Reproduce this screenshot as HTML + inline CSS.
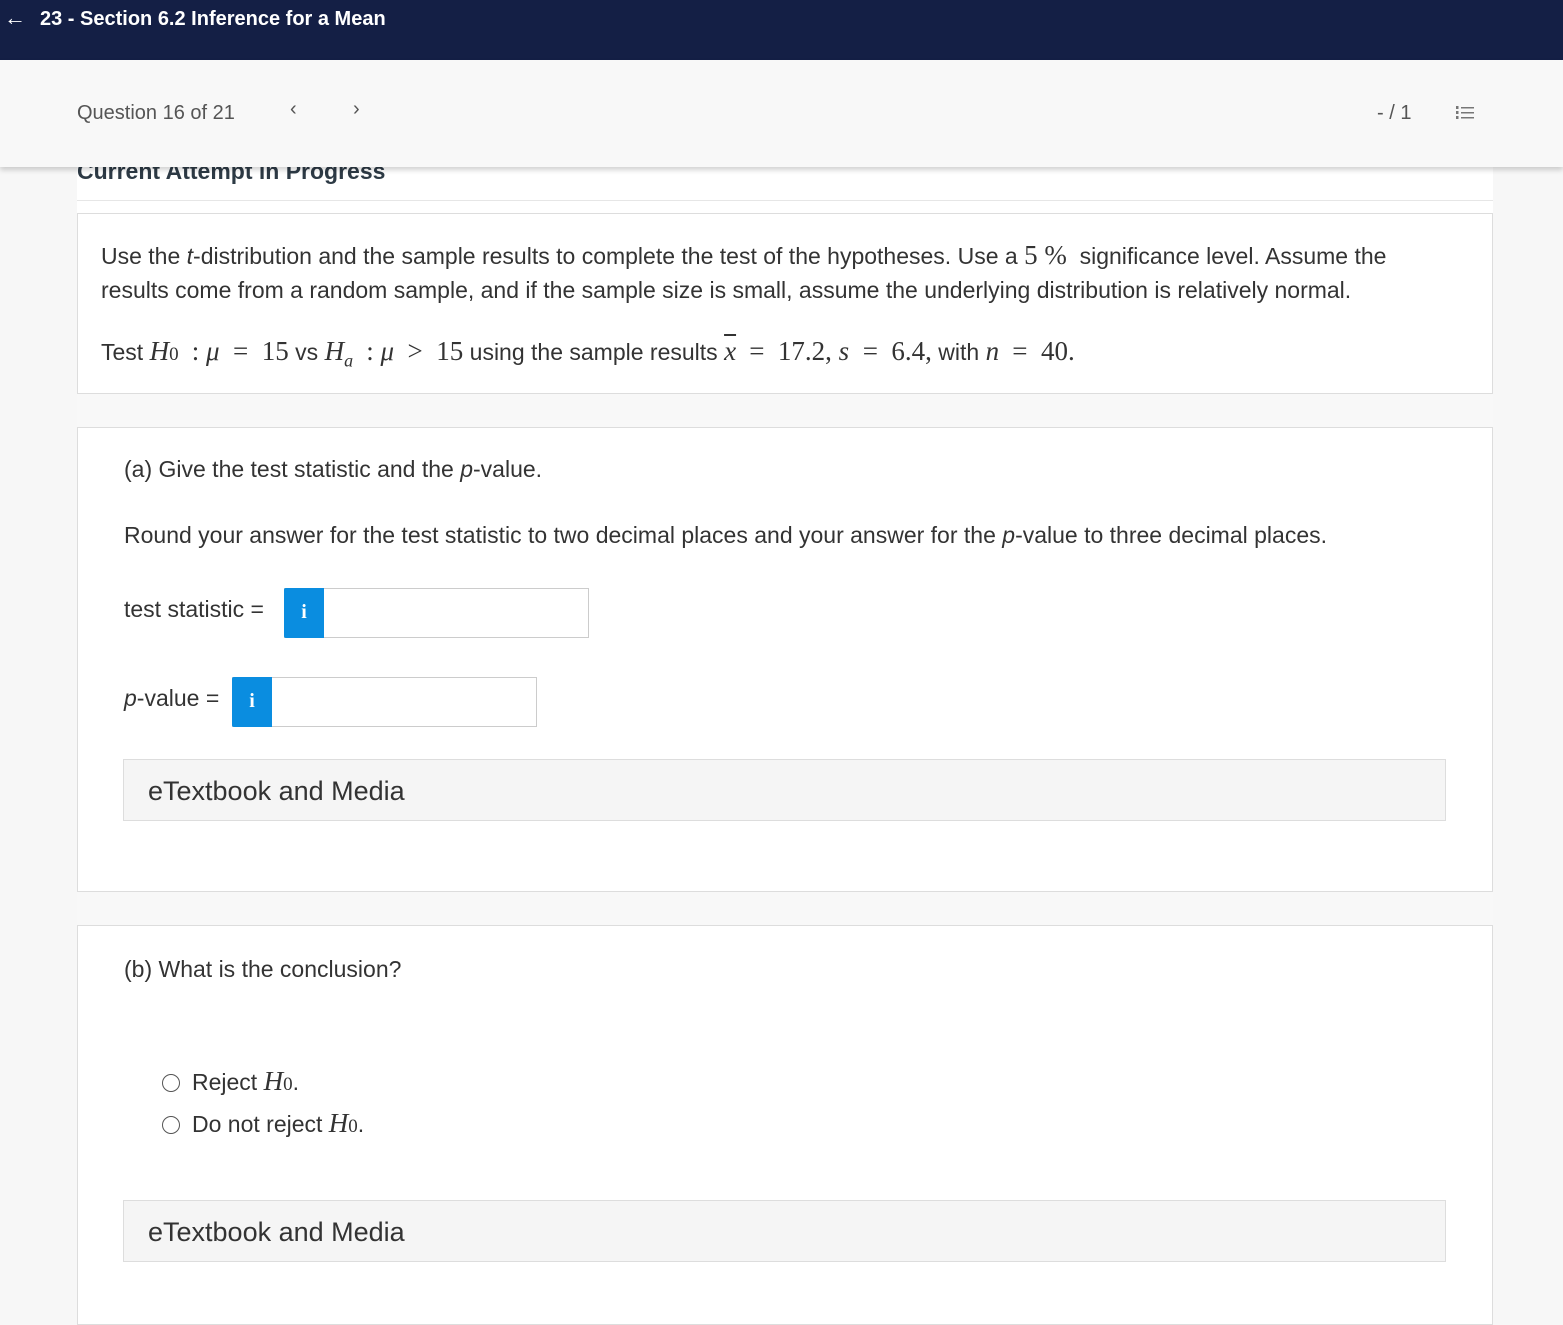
<!DOCTYPE html>
<html><head><meta charset="utf-8"><style>
*{box-sizing:border-box;margin:0;padding:0}
body{width:1563px;height:1306px;overflow:hidden;background:#f7f7f7;font-family:"Liberation Sans",sans-serif;color:#333;position:relative}
.top{position:absolute;left:0;top:0;width:1563px;height:60px;background:#141f45;color:#fff;font-weight:bold;font-size:20px}
.top .a{position:absolute;left:4px;top:5px;font-weight:normal;font-size:22px}
.top .t{position:absolute;left:40px;top:8px}
.sub{position:absolute;left:0;top:60px;width:1563px;height:107px;background:#f8f8f8;box-shadow:0 3px 5px rgba(0,0,0,.18);z-index:5;color:#555;font-size:20px}
.main{position:absolute;left:77px;top:150px;width:1416px;height:1160px;background:#fff}
.card{position:absolute;left:77px;width:1416px;background:#fff;border:1px solid #ddd;font-size:23px;color:#333}
.gap{position:absolute;left:77px;width:1416px;background:#f8f8f8}
.m{font-family:"Liberation Serif",serif;font-size:27px}
.mi{font-family:"Liberation Serif",serif;font-style:italic;font-size:27px}
.box{position:absolute;height:50px;border:1px solid #ccc;background:#fff}
.box .i{position:absolute;left:-1px;top:-1px;width:40px;height:50px;background:#0a8de0;border-radius:2px 0 0 2px;color:#fff;font-weight:bold;font-family:"Liberation Serif",serif;font-size:20px;text-align:center;line-height:48px}
.et{position:absolute;left:45px;width:1323px;height:62px;background:#f5f5f5;border:1px solid #ddd;font-size:27px;padding-left:24px;line-height:62px;color:#333}
.rad{display:inline-block;width:18px;height:18px;border:1.5px solid #555;border-radius:50%;vertical-align:-2px;margin-right:12px}
</style></head><body>
<div class="top"><span class="a">←</span><span class="t">23 - Section 6.2 Inference for a Mean</span></div>
<div class="sub">
<span style="position:absolute;left:77px;top:42px">Question 16 of 21</span>
<span style="position:absolute;left:290px;top:38px;font-size:20px">‹</span>
<span style="position:absolute;left:353px;top:38px;font-size:20px">›</span>
<span style="position:absolute;left:1377px;top:42px">- / 1</span>
<svg style="position:absolute;left:1455px;top:45px" width="20" height="16"><g fill="#777"><rect x="6" y="2" width="13" height="1.5"/><rect x="6" y="7" width="13" height="1.5"/><rect x="6" y="12" width="13" height="1.5"/><rect x="1" y="1" width="2.5" height="3"/><rect x="1" y="6" width="2.5" height="3"/><rect x="1" y="11" width="2.5" height="3"/></g></svg>
</div>
<div class="main"></div>
<div style="position:absolute;left:77px;top:158px;font-size:23px;font-weight:bold;color:#2d3a45">Current Attempt in Progress</div>
<div style="position:absolute;left:77px;top:200px;width:1416px;height:1px;background:#e6e6e6"></div>
<div class="card" style="top:213px;height:181px">
<div style="position:absolute;left:23px;top:24px;line-height:34px;width:1320px">Use the <i>t</i>-distribution and the sample results to complete the test of the hypotheses. Use a <span class="m">5 %</span> &nbsp;significance level. Assume the results come from a random sample, and if the sample size is small, assume the underlying distribution is relatively normal.</div>
<div style="position:absolute;left:23px;top:122px">Test <span class="mi">H</span><span class="m" style="font-size:19px">0</span> <span class="m">&nbsp;: <i>μ</i> &nbsp;= &nbsp;15</span> vs <span class="mi">H<sub style="font-size:18px">a</sub></span> <span class="m">&nbsp;: <i>μ</i> &nbsp;&gt; &nbsp;15</span> using the sample results <span class="mi" style="text-decoration:overline">x</span> <span class="m">&nbsp;= &nbsp;17.2, <i>s</i> &nbsp;= &nbsp;6.4,</span> with <span class="mi">n</span> <span class="m">&nbsp;= &nbsp;40.</span></div>
</div>
<div class="gap" style="top:394px;height:33px"></div>
<div class="card" style="top:427px;height:465px">
<div style="position:absolute;left:46px;top:28px">(a) Give the test statistic and the <i>p</i>-value.</div>
<div style="position:absolute;left:46px;top:94px">Round your answer for the test statistic to two decimal places and your answer for the <i>p</i>-value to three decimal places.</div>
<div style="position:absolute;left:46px;top:168px">test statistic =</div>
<div class="box" style="left:206px;top:160px;width:305px"><div class="i">i</div></div>
<div style="position:absolute;left:46px;top:257px"><i>p</i>-value =</div>
<div class="box" style="left:154px;top:249px;width:305px"><div class="i">i</div></div>
<div class="et" style="top:331px">eTextbook and Media</div>
</div>
<div class="gap" style="top:892px;height:33px"></div>
<div class="card" style="top:925px;height:400px">
<div style="position:absolute;left:46px;top:30px">(b) What is the conclusion?</div>
<div style="position:absolute;left:84px;top:140px"><span class="rad"></span>Reject <span class="mi">H</span><span class="m" style="font-size:19px">0</span>.</div>
<div style="position:absolute;left:84px;top:182px"><span class="rad"></span>Do not reject <span class="mi">H</span><span class="m" style="font-size:19px">0</span>.</div>
<div class="et" style="top:274px">eTextbook and Media</div>
</div>
</body></html>
